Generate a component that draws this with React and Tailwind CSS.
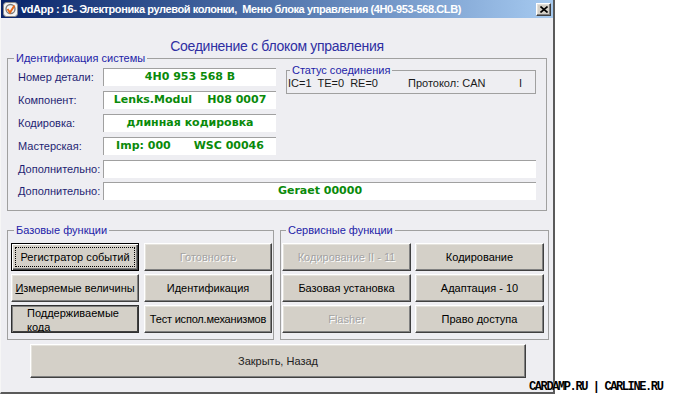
import React from "react";

const raised =
  "bg-[#d4d0c8] border border-t-white border-l-white border-r-[#404040] border-b-[#404040] shadow-[inset_-1px_-1px_0_#808080,inset_1px_1px_0_#e4e2dc]";

const disabledText = "text-[#a3a3a3] [text-shadow:1px_1px_0_#ffffff]";

function Button({ children, disabled, className = "" }) {
  return (
    <div
      className={`h-[28px] flex items-center justify-center text-[11px] whitespace-nowrap ${raised} ${
        disabled ? disabledText : "text-black"
      } ${className}`}
    >
      {children}
    </div>
  );
}

function Field({ label, value, wide }) {
  return (
    <div className="flex h-[18px] items-center">
      <div className="w-[85px] text-[11px] text-[#1f1f72]">{label}</div>
      <div
        className={`${
          wide ? "w-[433px]" : "w-[173px]"
        } h-[18px] bg-white border-t border-l border-[#a0a0a0] flex items-center justify-center whitespace-pre font-['DejaVu_Sans',Verdana,sans-serif] font-bold text-[11px] text-[#0a8a0a]`}
      >
        {value}
      </div>
    </div>
  );
}

function Group({ title, className = "", legendClass = "ml-[6px]", children }) {
  return (
    <fieldset className={`border border-[#a0a0a0] p-0 m-0 ${className}`}>
      <legend
        className={`px-[2px] text-[11px] leading-[13px] text-[#2323a8] ${legendClass}`}
      >
        {title}
      </legend>
      {children}
    </fieldset>
  );
}

export default function App() {
  return (
    <div className="w-[700px] h-[395px] bg-white relative overflow-hidden font-['Liberation_Sans',Arial,sans-serif]">
      <div className="w-[555px] h-[394px] bg-[#eeeef2] border-l border-l-[#f6f6f6] border-r-2 border-r-[#5a5a5a] border-b-2 border-b-[#5a5a5a] flex flex-col">
        {/* title bar */}
        <div className="h-[18px] flex items-center bg-linear-to-r from-[#0a246a] to-[#a6caf0] pl-[2px] pr-[2px]">
          <svg width="15" height="15" viewBox="0 0 15 15">
            <rect x="0.5" y="0.5" width="14" height="14" rx="3" fill="#f4f4f4" stroke="#8a8a8a" />
            <circle cx="7.5" cy="7" r="4.5" fill="none" stroke="#7a7a7a" strokeWidth="1.3" />
            <path d="M4.5 7 L7 10.5 L11.5 3.5" fill="none" stroke="#e8681a" strokeWidth="2" />
          </svg>
          <span className="ml-[3px] text-white font-bold text-[11px] tracking-[-0.4px] whitespace-pre">
            vdApp : 16- Электроника рулевой колонки,  Меню блока управления (4H0-953-568.CLB)
          </span>
          <div className={`ml-auto w-[15px] h-[13px] flex items-center justify-center ${raised}`}>
            <svg width="8" height="7" viewBox="0 0 8 7">
              <path d="M0.5 0.5 L7.5 6.5 M7.5 0.5 L0.5 6.5" stroke="#000" strokeWidth="1.6" />
            </svg>
          </div>
        </div>

        {/* heading */}
        <div className="h-[34px] pt-[20px] text-center text-[14px] tracking-[-0.3px] leading-[17px] text-[#2f2fa2]">
          Соединение с блоком управления
        </div>

        {/* identification */}
        <Group title="Идентификация системы" className="ml-[6px] w-[540px]">
          <div className="pt-[3px] pb-[10px] pl-[10px] flex flex-col gap-[5px]">
            <div className="flex items-start">
              <div className="flex flex-col gap-[5px]">
                <Field label="Номер детали:" value="4H0 953 568 B" />
                <Field label="Компонент:" value="Lenks.Modul    H08 0007" />
                <Field label="Кодировка:" value="длинная кодировка" />
                <Field label="Мастерская:" value="Imp: 000      WSC 00046" />
              </div>
              <Group
                title="Статус соединения"
                className="ml-[10px] -mt-[4px] w-[250px]"
                legendClass="ml-[3px]"
              >
                <div className="h-[16px] pl-[1px] flex items-start text-[11px] leading-[13px] text-[#1a1a1a]">
                  <span className="w-[120px] whitespace-pre">IC=1  TE=0  RE=0</span>
                  <span className="w-[111px]">Протокол: CAN</span>
                  <span>I</span>
                </div>
              </Group>
            </div>
            <Field label="Дополнительно:" value="" wide />
            <div className="-mt-[1px]">
              <Field label="Дополнительно:" value="Geraet 00000" wide />
            </div>
          </div>
        </Group>

        {/* function groups */}
        <div className="flex ml-[6px] mt-[13px] gap-[6px]">
          <Group title="Базовые функции" className="w-[267px]">
            <div className="pt-[6px] pb-[6px] pl-[3px] grid grid-cols-[128px_128px] gap-x-[5px] gap-y-[3px]">
              <div className="h-[28px] border border-black bg-[#d4d0c8] shadow-[inset_1px_1px_0_#fff,inset_-1px_-1px_0_#404040,inset_-2px_-2px_0_#808080] p-[3px]">
                <div className="h-full border border-dotted border-black flex items-center justify-center text-[11px] text-black whitespace-nowrap">
                  Регистратор событий
                </div>
              </div>
              <Button disabled>Готовность</Button>
              <Button>
                <span className="underline">И</span>змеряемые величины
              </Button>
              <Button>Идентификация</Button>
              <div className="h-[28px] overflow-hidden border border-[#303030] bg-[#d4d0c8] shadow-[inset_1px_1px_0_#808080,inset_-1px_-1px_0_#404040] pl-[15px] flex flex-col items-start text-[11px] leading-[14px] text-black">
                <span>Поддерживаемые</span>
                <span>кода</span>
              </div>
              <Button className="tracking-[-0.2px]">Тест испол.механизмов</Button>
            </div>
          </Group>

          <Group title="Сервисные функции" className="w-[269px]" legendClass="ml-[5px]">
            <div className="pt-[6px] pb-[6px] pl-[1px] grid grid-cols-[129px_129px] gap-x-[4px] gap-y-[3px]">
              <Button disabled>Кодирование II - 11</Button>
              <Button>Кодирование</Button>
              <Button>Базовая установка</Button>
              <Button>Адаптация - 10</Button>
              <Button disabled>Flasher</Button>
              <Button>Право доступа</Button>
            </div>
          </Group>
        </div>

        {/* close */}
        <div
          className={`ml-[29px] mt-[4px] w-[496px] h-[34px] flex items-center justify-center text-[11px] text-[#222] ${raised}`}
        >
          Закрыть, Назад
        </div>
      </div>

      <div className="absolute left-[529px] top-[380px] font-['Liberation_Mono',monospace] font-bold text-[12px] leading-[14px] tracking-[-1.4px] text-black [text-shadow:0_0_1px_#fff]">
        CARDAMP.RU | CARLINE.RU
      </div>
    </div>
  );
}
